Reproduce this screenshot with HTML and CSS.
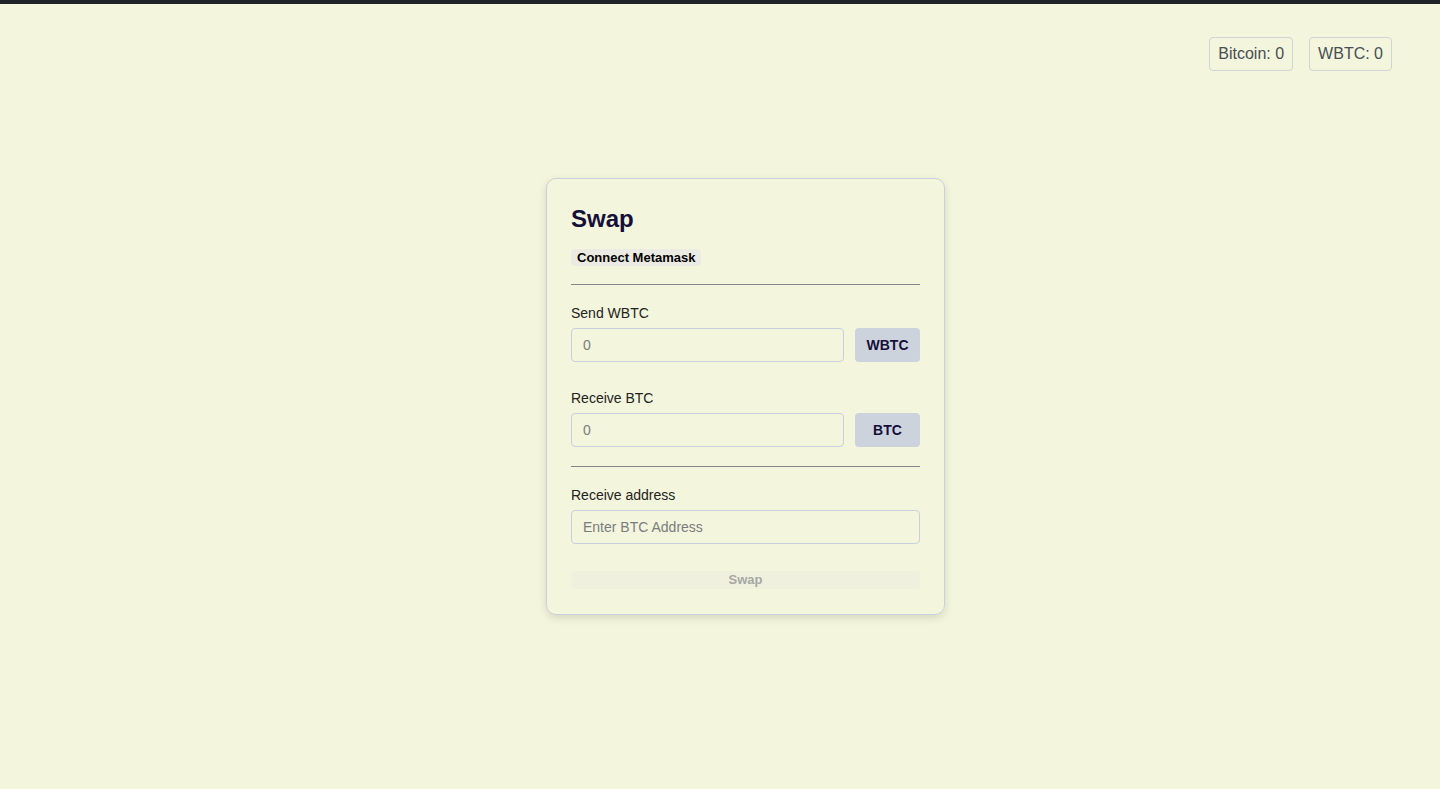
FILE: index.html
```html
<!DOCTYPE html>
<html lang="en">
<head>
<meta charset="utf-8">
<title>Swap</title>
<link rel="stylesheet" href="styles.css">
</head>
<body>
<div class="topbar"></div>
<header class="header">
  <div class="balance">Bitcoin: 0</div>
  <div class="balance">WBTC: 0</div>
</header>
<main class="main">
  <section class="card">
    <h2 class="title">Swap</h2>
    <button class="connect">Connect Metamask</button>
    <hr class="divider divider-top">
    <label class="label">Send WBTC</label>
    <div class="row">
      <input class="input" placeholder="0">
      <button class="token">WBTC</button>
    </div>
    <label class="label label-gap">Receive BTC</label>
    <div class="row">
      <input class="input" placeholder="0">
      <button class="token">BTC</button>
    </div>
    <hr class="divider divider-mid">
    <label class="label">Receive address</label>
    <input class="input input-full" placeholder="Enter BTC Address">
    <button class="swap" disabled>Swap</button>
  </section>
</main>
</body>
</html>
```
FILE: styles.css
```css
* { box-sizing: border-box; }
html, body {
  margin: 0;
  padding: 0;
  height: 100%;
}
body {
  background: #f3f5dc;
  font-family: "Liberation Sans", Arial, sans-serif;
  color: #1f1f1f;
  overflow: hidden;
}
.topbar {
  height: 4px;
  background: #1f2429;
}
.header {
  display: flex;
  justify-content: flex-end;
  gap: 16px;
  padding: 33px 48px 0 0;
}
.balance {
  border: 1px solid #cfd4d6;
  border-radius: 4px;
  padding: 7px 8px;
  font-size: 16px;
  line-height: 18px;
  color: #484e55;
}
.main {
  display: flex;
  justify-content: center;
  padding: 107px 0 0 51px;
}
.card {
  width: 399px;
  border: 1px solid #c9d0dd;
  border-radius: 10px;
  padding: 24px 24px 25px;
  display: flex;
  flex-direction: column;
  box-shadow: 0 3px 8px rgba(0, 0, 0, 0.12);
}
.title {
  margin: 0;
  font-size: 24px;
  line-height: 32px;
  font-weight: 700;
  color: #150f3a;
}
.connect {
  align-self: flex-start;
  margin-top: 14px;
  border: none;
  border-radius: 4px;
  background: #ebebe3;
  font-family: inherit;
  font-size: 13px;
  font-weight: 700;
  line-height: 17px;
  padding: 0 6px;
  color: #000;
}
.divider {
  margin: 0;
  border: none;
  border-top: 1.5px solid #85878d;
  height: 0;
}
.divider-top { margin-top: 18px; margin-bottom: 18px; }
.divider-mid { margin-top: 19px; margin-bottom: 18px; }
.label {
  font-size: 14px;
  line-height: 20px;
  color: #222;
  margin-bottom: 5px;
}
.label-gap { margin-top: 26px; }
.row {
  display: flex;
  gap: 11px;
}
.input {
  flex: 1;
  height: 34px;
  border: 1px solid #c9d0dd;
  border-radius: 4px;
  background: transparent;
  padding: 0 11px;
  font-family: inherit;
  font-size: 14px;
  color: #333;
}
.input::placeholder { color: #7a7d80; }
.input-full { flex: none; width: 100%; }
.token {
  width: 65px;
  height: 34px;
  border: none;
  border-radius: 4px;
  background: #cdd3dd;
  font-family: inherit;
  font-size: 14px;
  font-weight: 700;
  color: #150f3a;
}
.swap {
  margin-top: 27px;
  height: 18px;
  border: none;
  border-radius: 4px;
  background: #eff1de;
  font-family: inherit;
  font-size: 13px;
  font-weight: 700;
  line-height: 18px;
  padding: 0;
  color: #a6a7a4;
}
```
